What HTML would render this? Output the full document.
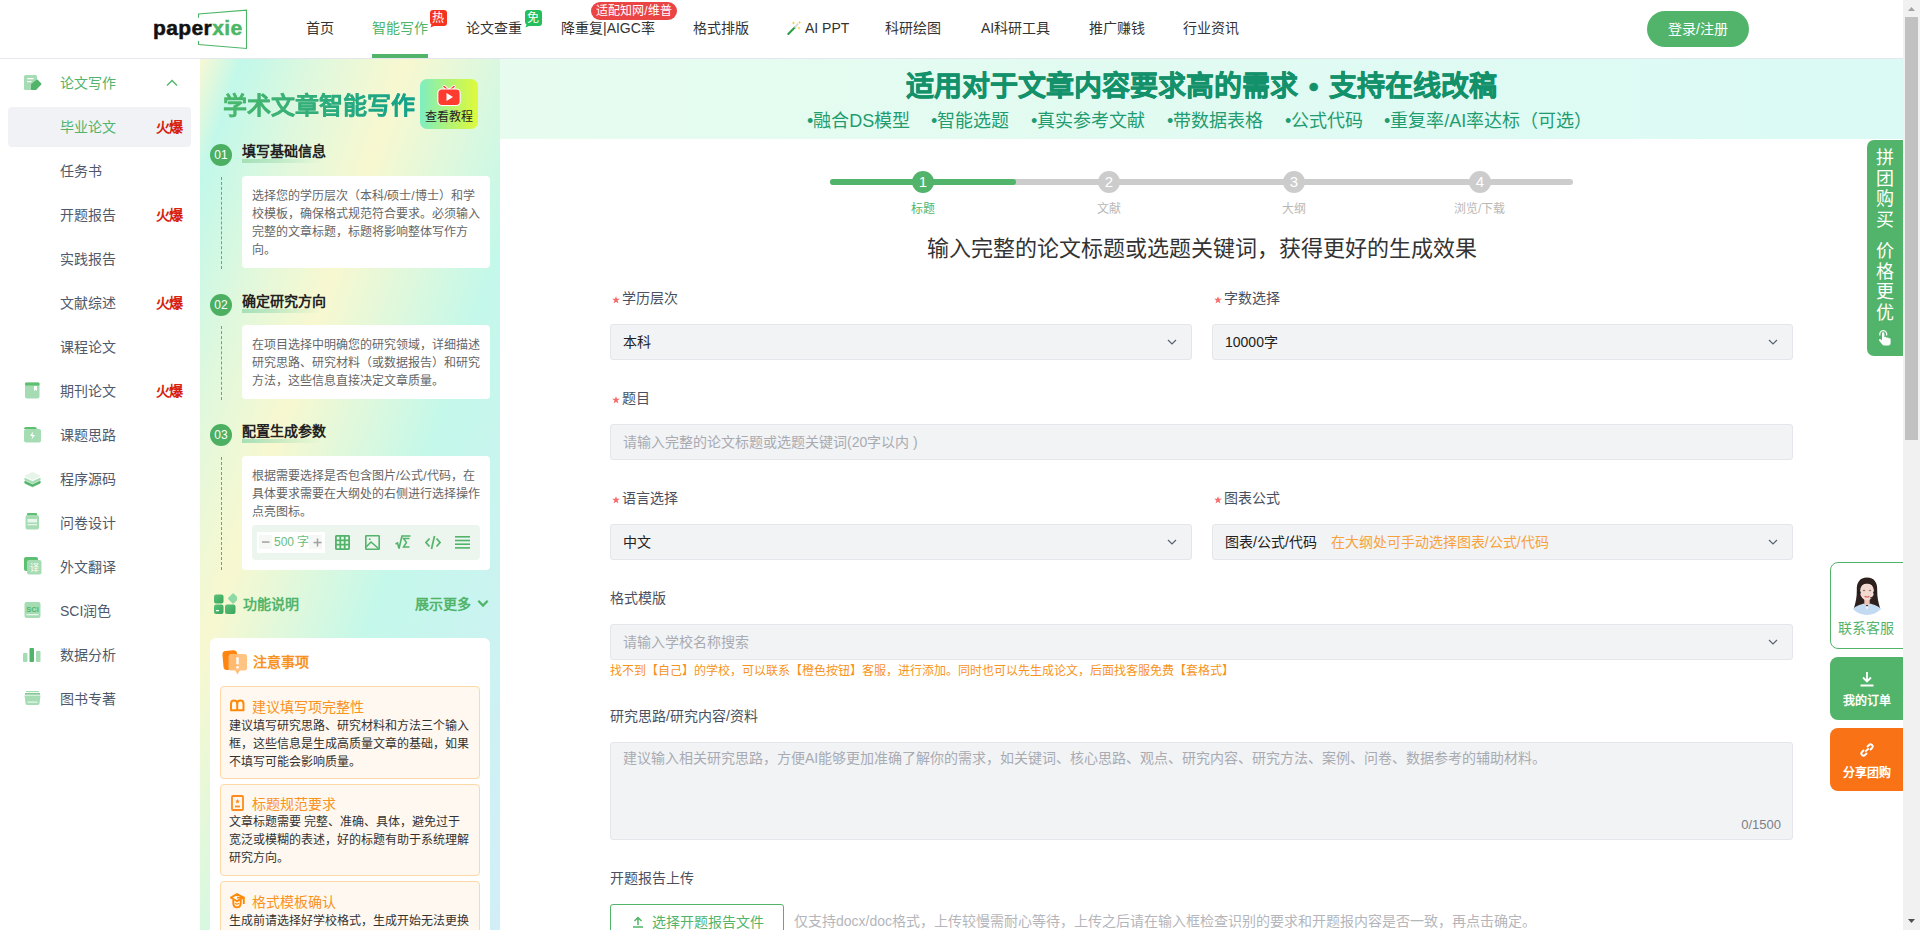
<!DOCTYPE html>
<html lang="zh-CN"><head><meta charset="utf-8">
<style>
*{box-sizing:border-box;margin:0;padding:0}
html,body{width:1920px;height:930px;overflow:hidden;background:#fff}
body{font-family:"Liberation Sans",sans-serif;color:#333;position:relative}
.a{position:absolute;white-space:nowrap}
/* header */
#hdr{position:absolute;left:0;top:0;width:1903px;height:59px;background:#fff;border-bottom:1px solid #e4e7ed}
.nav{position:absolute;top:18px;font-size:14px;line-height:20px;color:#333}
.badge{position:absolute;color:#fff;font-size:12px;line-height:16px;text-align:center}
/* sidebar */
#side{position:absolute;left:0;top:59px;width:200px;height:871px;background:#fff}
.si{position:absolute;left:60px;font-size:14px;line-height:20px;color:#4f596b}
.hot{position:absolute;left:156px;font-size:14px;line-height:20px;color:#d81e0c;font-weight:bold;letter-spacing:-1px}
.sic{position:absolute;left:24px}
/* panel */
#panel{position:absolute;left:200px;top:59px;width:300px;height:871px;
background:linear-gradient(109deg,#f8f8d4 0px,#c2f8ea 40px,#e2f8dc 120px,#f8f8d0 195px,#c4f8ea 345px,#d2eef8 570px)}
.stepno{position:absolute;left:10px;width:22px;height:22px;border-radius:50%;background:#4caf62;color:#fff;font-size:12px;line-height:22px;text-align:center}
.steptt{position:absolute;left:42px;font-size:14px;line-height:20px;font-weight:bold;color:#222}
.stepul{position:absolute;left:42px;width:80px;height:4px;background:linear-gradient(90deg,#a6dfb6,rgba(200,240,210,0))}
.dash{position:absolute;left:21px;width:0;border-left:1px dashed #52b46a}
.card{position:absolute;left:42px;width:248px;background:#fff;border-radius:4px}
.ctext{position:absolute;left:10px;top:11px;width:232px;font-size:12px;line-height:18px;color:#666;white-space:normal}
/* main */
#banner{position:absolute;left:500px;top:59px;width:1403px;height:80px;background:linear-gradient(90deg,#e7fcef,#dbfaf5)}
.lbl{position:absolute;font-size:14px;line-height:20px;color:#4a5060}
.lbs{padding-left:10px}
.star{position:absolute;left:0px;top:7.5px}
.inp{position:absolute;height:36px;background:#f2f3f5;border:1px solid #e4e6eb;border-radius:3px}
.itxt{position:absolute;left:12px;top:7px;font-size:14px;line-height:20px;color:#222;white-space:nowrap}
.ph{color:#a8abb2}
.chev{position:absolute;right:14px;top:14px}
.bul{top:50px;font-size:18px;line-height:24px;color:#1f9c70}
.sc{top:171px;width:22px;height:22px;border-radius:50%;background:#cccccc;color:#fff;font-size:15px;line-height:22px;text-align:center}
.sl{top:201px;font-size:12px;line-height:17px;color:#b8b8b8}
</style></head>
<body>
<!-- HEADER -->
<div id="hdr">
  <!-- logo -->
  <svg class="a" style="left:150px;top:8px" width="100" height="44" viewBox="0 0 100 44">
    <path d="M48.5 9.7 V6 L96.5 2.2 V40.5 L48.5 36.6 V33" fill="none" stroke="#4cb666" stroke-width="1.1"/>
  </svg>
  <div class="a" style="left:153px;top:15px;font-size:21px;line-height:25px;font-weight:bold;color:#111;letter-spacing:0.4px;-webkit-text-stroke:0.5px #111">paper<span style="color:#4cb666;-webkit-text-stroke:0.5px #4cb666">xie</span></div>

  <div class="nav" style="left:306px">首页</div>
  <div class="nav" style="left:372px;color:#4fb468">智能写作</div>
  <div class="a" style="left:372px;top:54px;width:56px;height:4px;background:#52b46a"></div>
  <svg class="a" style="left:426px;top:10px" width="21" height="18" viewBox="0 0 21 18"><path d="M7 0 H18 Q21 0 21 3 V13 Q21 16 18 16 H8 L4.5 17.5 L5.5 14.5 Q4 13.5 4 12 V3 Q4 0 7 0Z" fill="#f5341f"/></svg><div class="badge" style="left:430px;top:10px;width:16px;height:16px">热</div>
  <div class="nav" style="left:466px">论文查重</div>
  <svg class="a" style="left:521px;top:10px" width="21" height="18" viewBox="0 0 21 18"><path d="M7 0 H18 Q21 0 21 3 V13 Q21 16 18 16 H8 L4.5 17.5 L5.5 14.5 Q4 13.5 4 12 V3 Q4 0 7 0Z" fill="#22bf5c"/></svg><div class="badge" style="left:525px;top:10px;width:16px;height:16px">免</div>
  <div class="nav" style="left:561px">降重复|AIGC率</div>
  <div class="badge" style="left:591px;top:2px;width:86px;height:18px;line-height:18px;background:#ea4444;border-radius:9px">适配知网/维普</div>
  <div class="nav" style="left:693px">格式排版</div>
  <svg class="a" style="left:786px;top:20px" width="16" height="16" viewBox="0 0 16 16">
    <path d="M2.3 14 L9.2 7" stroke="#2e9e4a" stroke-width="2.1" stroke-linecap="round"/>
    <path d="M9.2 7 L11.7 4.3" stroke="#dcdcdc" stroke-width="2" stroke-linecap="round"/>
    <path d="M7.4 1.2 l0.55 1.25 1.25 0.55 -1.25 0.55 -0.55 1.25 -0.55 -1.25 -1.25 -0.55 1.25 -0.55z M13.6 0.7 l0.5 1.2 1.2 0.5 -1.2 0.5 -0.5 1.2 -0.5 -1.2 -1.2 -0.5 1.2 -0.5z M13 6.5 l0.5 1.1 1.1 0.5 -1.1 0.5 -0.5 1.1 -0.5 -1.1 -1.1 -0.5 1.1 -0.5z" fill="#f9c930"/>
  </svg>
  <div class="nav" style="left:805px">AI PPT</div>
  <div class="nav" style="left:885px">科研绘图</div>
  <div class="nav" style="left:981px">AI科研工具</div>
  <div class="nav" style="left:1089px">推广赚钱</div>
  <div class="nav" style="left:1183px">行业资讯</div>

  <div class="a" style="left:1647px;top:11px;width:102px;height:36px;border-radius:18px;background:#52b46a;color:#fff;font-size:14px;line-height:36px;text-align:center">登录/注册</div>
</div>

<!-- SIDEBAR -->
<div id="side">
  <svg class="sic" style="top:16px" width="18" height="16" viewBox="0 0 18 16">
    <rect x="0" y="0" width="13" height="15" rx="1.5" fill="#a6dcb3"/>
    <rect x="3" y="2.9" width="6.8" height="1.3" rx="0.6" fill="#fff"/><rect x="3" y="5.9" width="4.7" height="1.3" rx="0.6" fill="#fff"/>
    <path d="M7 9.8 Q7 9.2 7.5 8.8 L12.5 4.8 Q13.3 4.2 14 4.9 L17.3 8.4 Q17.9 9 17.3 9.6 L12.5 14.4 Q12.1 14.9 11.4 14.9 L7.6 14.9 Q7 14.9 7 14.3Z" fill="#52b46a"/>
  </svg>
  <div class="si" style="top:14px;color:#52b46a">论文写作</div>
  <svg class="a" style="left:166px;top:20px" width="12" height="8" viewBox="0 0 12 8"><path d="M1 6.5 L6 1.5 L11 6.5" fill="none" stroke="#52b46a" stroke-width="1.4"/></svg>
  <div class="a" style="left:8px;top:48px;width:183px;height:40px;background:#f0f2f5;border-radius:4px"></div>
  <div class="si" style="top:58px;color:#52b46a">毕业论文</div><div class="hot" style="top:58px">火爆</div>
  <div class="si" style="top:102px">任务书</div>
  <div class="si" style="top:146px">开题报告</div><div class="hot" style="top:146px">火爆</div>
  <div class="si" style="top:190px">实践报告</div>
  <div class="si" style="top:234px">文献综述</div><div class="hot" style="top:234px">火爆</div>
  <div class="si" style="top:278px">课程论文</div>
  <svg class="sic" style="top:323px" width="16" height="17" viewBox="0 0 16 17">
    <rect x="1" y="0.5" width="14.5" height="16" rx="2" fill="#a6dcb3"/><rect x="1" y="0.5" width="14.5" height="3" rx="1" fill="#5cbf72"/>
    <path d="M10 4 h3 v5 l-1.5 -1.2 l-1.5 1.2z" fill="#fff"/>
  </svg>
  <div class="si" style="top:322px">期刊论文</div><div class="hot" style="top:322px">火爆</div>
  <svg class="sic" style="top:368px" width="17" height="16" viewBox="0 0 17 16">
    <path d="M0 2 q0 -2 2 -2 h9 q1.5 0 2 2 h-13z" fill="#5cbf72"/>
    <rect x="0" y="2" width="17" height="13.5" rx="2" fill="#a6dcb3"/>
    <path d="M9 4.5 L6 9 h2.5 L7.5 12.5 L11 8 h-2.5z" fill="#fff"/>
  </svg>
  <div class="si" style="top:366px">课题思路</div>
  <svg class="sic" style="top:412px" width="17" height="17" viewBox="0 0 17 17" stroke-linejoin="round">
    <path d="M8.5 1.3 L15.8 5 L8.5 8.7 L1.2 5Z" fill="#e6f5ea" stroke="#e6f5ea" stroke-width="1"/>
    <path d="M0.8 7 L8.5 10.6 L16.2 7 L16.2 8.9 L8.5 12.5 L0.8 8.9Z" fill="#a6dcb3" stroke="#a6dcb3" stroke-width="0.6"/>
    <path d="M0.8 10 L8.5 13.6 L16.2 10 L16.2 12.2 L8.5 15.8 L0.8 12.2Z" fill="#52b46a" stroke="#52b46a" stroke-width="0.6"/>
  </svg>
  <div class="si" style="top:410px">程序源码</div>
  <svg class="sic" style="top:454px" width="16" height="17" viewBox="0 0 16 17">
    <rect x="3" y="0" width="10" height="3" rx="1" fill="#5cbf72"/>
    <rect x="1.5" y="2" width="13.5" height="14.5" rx="2" fill="#a6dcb3"/>
    <rect x="3.5" y="6" width="9.5" height="3.5" fill="#e8f6ec"/><rect x="3.5" y="11" width="9.5" height="1.3" fill="#e8f6ec"/>
  </svg>
  <div class="si" style="top:454px">问卷设计</div>
  <svg class="sic" style="top:498px" width="18" height="18" viewBox="0 0 18 18">
    <rect x="0" y="0" width="14" height="14" rx="2" fill="#5cbf72"/>
    <rect x="3" y="3" width="14.5" height="14.5" rx="2" fill="#a6dcb3"/>
    <text x="10.2" y="14" font-size="9" fill="#fff" text-anchor="middle" font-family="Liberation Sans,sans-serif">译</text>
  </svg>
  <div class="si" style="top:498px">外文翻译</div>
  <svg class="sic" style="top:543px" width="17" height="16" viewBox="0 0 17 16">
    <rect x="0.5" y="0" width="16" height="16" rx="2" fill="#a6dcb3"/>
    <text x="8.5" y="9.5" font-size="7.5" font-weight="bold" fill="#52b46a" text-anchor="middle" font-family="Liberation Sans,sans-serif">SCI</text>
    <rect x="2.5" y="12" width="12" height="1.3" fill="#e8f6ec"/>
  </svg>
  <div class="si" style="top:542px">SCI润色</div>
  <svg class="sic" style="top:589px;left:23px" width="18" height="14" viewBox="0 0 18 14">
    <rect x="0" y="5" width="4.5" height="9" rx="0.8" fill="#a6dcb3"/>
    <rect x="6.5" y="0" width="4.5" height="14" rx="0.8" fill="#52b46a"/>
    <rect x="13" y="3" width="4.5" height="11" rx="0.8" fill="#a6dcb3"/>
  </svg>
  <div class="si" style="top:586px">数据分析</div>
  <svg class="sic" style="top:632px" width="17" height="14" viewBox="0 0 17 14">
    <rect x="2" y="0" width="13" height="1.2" fill="#a6dcb3"/>
    <rect x="1" y="2.3" width="15" height="1.2" fill="#52b46a"/>
    <path d="M0.5 4.5 h16 l-1 8 q-0.3 1.5 -1.8 1.5 h-10.4 q-1.5 0 -1.8 -1.5z" fill="#a6dcb3"/>
    <rect x="3.5" y="10.5" width="10" height="1.2" fill="#e8f6ec"/>
  </svg>
  <div class="si" style="top:630px">图书专著</div>
</div>

<!-- PANEL -->
<div id="panel">
  <div class="a" style="left:23px;top:32px;font-size:24px;line-height:30px;font-weight:bold;background:linear-gradient(90deg,#4db86b,#12a28c);-webkit-background-clip:text;background-clip:text;color:transparent;-webkit-text-stroke:0.3px transparent">学术文章智能写作</div>
  <div class="a" style="left:220px;top:20px;width:58px;height:50px;border-radius:7px;background:linear-gradient(90deg,#7eeec2,#b6f46e 55%,#dffa3c)">
    <svg class="a" style="left:17px;top:6px" width="24" height="22" viewBox="0 0 24 22">
      <path d="M7 1.5 L11 5 M17 1.5 L13 5" stroke="#fff" stroke-width="3.2" stroke-linecap="round"/>
      <path d="M7 1.5 L11 5 M17 1.5 L13 5" stroke="#ff3b30" stroke-width="1.6" stroke-linecap="round"/>
      <rect x="0.8" y="4" width="22.4" height="16.5" rx="4" fill="#ff3b30" stroke="#fff" stroke-width="1.2"/>
      <path d="M9.5 8 L16 12 L9.5 16Z" fill="#fff"/>
    </svg>
    <div class="a" style="left:5px;top:30px;font-size:12px;line-height:16px;color:#222">查看教程</div>
  </div>

  <div class="stepno" style="top:85px">01</div>
  <div class="stepul" style="top:100px"></div>
  <div class="steptt" style="top:82px">填写基础信息</div>
  <div class="dash" style="top:118px;height:92px"></div>
  <div class="card" style="top:117px;height:92px"><div class="ctext">选择您的学历层次（本科/硕士/博士）和学校模板，确保格式规范符合要求。必须输入完整的文章标题，标题将影响整体写作方向。</div></div>

  <div class="stepno" style="top:235px">02</div>
  <div class="stepul" style="top:250px"></div>
  <div class="steptt" style="top:232px">确定研究方向</div>
  <div class="dash" style="top:267px;height:74px"></div>
  <div class="card" style="top:266px;height:74px"><div class="ctext">在项目选择中明确您的研究领域，详细描述研究思路、研究材料（或数据报告）和研究方法，这些信息直接决定文章质量。</div></div>

  <div class="stepno" style="top:365px">03</div>
  <div class="stepul" style="top:380px"></div>
  <div class="steptt" style="top:362px">配置生成参数</div>
  <div class="dash" style="top:398px;height:113px"></div>
  <div class="card" style="top:397px;height:114px"><div class="ctext">根据需要选择是否包含图片/公式/代码，在具体要求需要在大纲处的右侧进行选择操作点亮图标。</div>
    <div class="a" style="left:10px;top:69px;width:228px;height:35px;background:#edf6ee;border-radius:4px">
      <div class="a" style="left:5px;top:7px;width:68px;height:21px;background:#fff"></div>
      <div class="a" style="left:7px;top:10px;width:13px;height:14px;background:#f6f8f6"></div>
      <div class="a" style="left:57px;top:10px;width:13px;height:14px;background:#f6f8f6"></div>
      <svg class="a" style="left:10px;top:16px" width="8" height="3"><rect x="0" y="0.3" width="7.5" height="1.5" fill="#a0a0a0"/></svg>
      <div class="a" style="left:22px;top:9px;font-size:12px;line-height:17px;color:#66be7e">500 字</div>
      <svg class="a" style="left:61px;top:13px" width="9" height="9"><rect x="0.5" y="3.8" width="8" height="1.5" fill="#a0a0a0"/><rect x="3.75" y="0.5" width="1.5" height="8" fill="#a0a0a0"/></svg>
      <svg class="a" style="left:83px;top:10px" width="15" height="15" viewBox="0 0 15 15" fill="none" stroke="#52b46a" stroke-width="1.8">
        <rect x="0.9" y="0.9" width="13.2" height="13.2" rx="0.5"/><path d="M5.3 1 V14 M9.7 1 V14 M1 5.3 H14 M1 9.7 H14"/>
      </svg>
      <svg class="a" style="left:113px;top:10px" width="15" height="15" viewBox="0 0 15 15" fill="none" stroke="#52b46a" stroke-width="1.6">
        <rect x="0.8" y="0.8" width="13.4" height="13.4" rx="0.5"/><path d="M1 12 L6 7 L13.5 13.5"/><circle cx="4.8" cy="4.2" r="0.9" fill="#52b46a" stroke="none"/>
      </svg>
      <svg class="a" style="left:143px;top:10px" width="16" height="15" viewBox="0 0 16 15" fill="none" stroke="#52b46a" stroke-width="1.6">
        <path d="M0.5 9 L2.5 8 L4 13.5 L7 1 H15.5"/><path d="M14.5 3.5 H8.5 L11.5 7.5 L8.5 12 H14.5" stroke-width="1.5"/>
      </svg>
      <svg class="a" style="left:173px;top:10px" width="16" height="15" viewBox="0 0 16 15" fill="none" stroke="#52b46a" stroke-width="1.7">
        <path d="M4.5 3.5 L1 7.5 L4.5 11.5 M11.5 3.5 L15 7.5 L11.5 11.5 M9.5 1 L6.5 14"/>
      </svg>
      <svg class="a" style="left:203px;top:11px" width="15" height="13" viewBox="0 0 15 13" fill="#52b46a">
        <rect x="0" y="0" width="15" height="1.6"/><rect x="0" y="3.7" width="15" height="1.6"/><rect x="0" y="7.4" width="15" height="1.6"/><rect x="0" y="11.1" width="15" height="1.6"/>
      </svg>
    </div>
  </div>

  <svg class="a" style="left:14px;top:534px" width="23" height="22" viewBox="0 0 23 22">
    <defs><linearGradient id="gg" x1="0" y1="0" x2="1" y2="1"><stop offset="0" stop-color="#5cc27a"/><stop offset="1" stop-color="#3aa55a"/></linearGradient></defs>
    <rect x="0" y="1.5" width="9.5" height="9" rx="2" fill="url(#gg)"/>
    <rect x="14.5" y="0" width="8" height="8" rx="1.5" transform="rotate(45 17 5.5)" fill="#8fd9a6"/>
    <rect x="0" y="11.5" width="9.5" height="9.5" rx="2" fill="url(#gg)"/>
    <rect x="11" y="11.5" width="10.5" height="9.5" rx="2" fill="url(#gg)"/>
    <rect x="2" y="17" width="3" height="1.2" fill="#fff"/>
  </svg>
  <div class="a" style="left:43px;top:535px;font-size:14px;line-height:20px;font-weight:bold;color:#52b46a">功能说明</div>
  <div class="a" style="left:215px;top:535px;font-size:14px;line-height:20px;font-weight:bold;color:#52b46a">展示更多</div>
  <svg class="a" style="left:277px;top:540px" width="12" height="9" viewBox="0 0 12 9"><path d="M1.3 1.8 L6 6.5 L10.7 1.8" fill="none" stroke="#52b46a" stroke-width="2.3"/></svg>

  <div class="a" style="left:10px;top:579px;width:280px;height:300px;background:#fff;border-radius:6px">
    <svg class="a" style="left:12px;top:12px" width="26" height="26" viewBox="0 0 26 26">
      <path d="M0.5 5 Q0 1.5 3.5 1 L11 0.2 Q14.5 -0.2 15 3 L16.5 15 Q17 18.5 13.5 19 L5.5 20 Q2 20.5 1.5 17z" fill="#ff8410"/>
      <rect x="6.5" y="4" width="18.5" height="16.5" rx="2.5" fill="#ffbf78" opacity="0.92"/>
      <path d="M13 20 L15.5 24.5 L18 20z" fill="#ffbf78"/>
      <rect x="14.3" y="7" width="2.4" height="7.5" rx="1.2" fill="#fff"/><circle cx="15.5" cy="17.2" r="1.3" fill="#fff"/>
    </svg>
    <div class="a" style="left:43px;top:14px;font-size:14px;line-height:20px;font-weight:bold;color:#f7931e">注意事项</div>

    <div class="a" style="left:10px;top:48px;width:260px;height:93px;background:#fff8f0;border:1px solid #fcd9a6;border-radius:4px">
      <svg class="a" style="left:8px;top:12px" width="17" height="13" viewBox="0 0 17 13" fill="none" stroke="#ff8a0a" stroke-width="2">
        <path d="M2 11.5 V5 Q2 1.6 5 1.6 Q8.2 1.6 8.2 5 V11.5 M8.2 5 Q8.2 1.6 11.4 1.6 Q14.5 1.6 14.5 5 V11.5 M1.3 11.3 H15.2"/>
      </svg>
      <div class="a" style="left:31px;top:10px;font-size:14px;line-height:20px;color:#f7931e">建议填写项完整性</div>
      <div class="ctext" style="left:8px;top:30px;width:241px;color:#333">建议填写研究思路、研究材料和方法三个输入框，这些信息是生成高质量文章的基础，如果不填写可能会影响质量。</div>
    </div>
    <div class="a" style="left:10px;top:146px;width:260px;height:92px;background:#fff8f0;border:1px solid #fcd9a6;border-radius:4px">
      <svg class="a" style="left:10px;top:10px" width="13" height="16" viewBox="0 0 13 16" fill="none" stroke="#ff8a1c" stroke-width="1.8">
        <rect x="1" y="1" width="11" height="14" rx="1"/><path d="M4 11.5 H9"/><path d="M6.5 4 l0.7 1.5 1.6 0.2 -1.2 1.1 0.3 1.6 -1.4 -0.8 -1.4 0.8 0.3 -1.6 -1.2 -1.1 1.6 -0.2z" fill="#ff8a1c" stroke="none"/>
      </svg>
      <div class="a" style="left:31px;top:9px;font-size:14px;line-height:20px;color:#f7931e">标题规范要求</div>
      <div class="ctext" style="left:8px;top:28px;width:241px;color:#333">文章标题需要 完整、准确、具体，避免过于宽泛或模糊的表述，好的标题有助于系统理解研究方向。</div>
    </div>
    <div class="a" style="left:10px;top:243px;width:260px;height:80px;background:#fff8f0;border:1px solid #fcd9a6;border-radius:4px">
      <svg class="a" style="left:9px;top:11px" width="17" height="16" viewBox="0 0 17 16">
        <path d="M7 1 L13.6 4.6 L7 8.2 L0.9 4.6Z" fill="none" stroke="#ff8a0a" stroke-width="1.9" stroke-linejoin="round"/>
        <path d="M7 4.6 H13.8 V11" fill="none" stroke="#ff8a0a" stroke-width="1.9"/>
        <path d="M3.3 7 V10 Q3.3 14.3 7 14.3 Q10.7 14.3 10.7 10 V7" fill="none" stroke="#ff8a0a" stroke-width="1.9"/>
        <path d="M5 10.2 Q7 12 9 10.2" fill="none" stroke="#ff8a0a" stroke-width="1.2"/>
      </svg>
      <div class="a" style="left:31px;top:10px;font-size:14px;line-height:20px;color:#f7931e">格式模板确认</div>
      <div class="ctext" style="left:8px;top:30px;width:241px;color:#333">生成前请选择好学校格式，生成开始无法更换</div>
    </div>
  </div>
</div>

<!-- MAIN -->
<div id="banner">
  <div class="a" style="left:406px;top:11px;font-size:28px;line-height:34px;font-weight:bold;color:#13916a;word-spacing:3px;-webkit-text-stroke:0.6px #13916a">适用对于文章内容要求高的需求 • 支持在线改稿</div>
  <div class="a bul" style="left:307px">•融合DS模型</div>
  <div class="a bul" style="left:431px">•智能选题</div>
  <div class="a bul" style="left:531px">•真实参考文献</div>
  <div class="a bul" style="left:667px">•带数据表格</div>
  <div class="a bul" style="left:785px">•公式代码</div>
  <div class="a bul" style="left:884px">•重复率/AI率达标（可选）</div>
</div>

<div id="main">
  <!-- steps -->
  <div class="a" style="left:830px;top:179px;width:743px;height:6px;border-radius:3px;background:#cccccc"></div>
  <div class="a" style="left:830px;top:179px;width:186px;height:6px;border-radius:3px;background:#52b46a"></div>
  <div class="a sc" style="left:912px;background:#52b46a">1</div>
  <div class="a sc" style="left:1098px">2</div>
  <div class="a sc" style="left:1283px">3</div>
  <div class="a sc" style="left:1469px">4</div>
  <div class="a sl" style="left:911px;color:#52b46a">标题</div>
  <div class="a sl" style="left:1097px">文献</div>
  <div class="a sl" style="left:1282px">大纲</div>
  <div class="a sl" style="left:1454px">浏览/下载</div>

  <div class="a" style="left:927px;top:235px;font-size:22px;line-height:28px;color:#333">输入完整的论文标题或选题关键词，获得更好的生成效果</div>

  <div class="lbl lbs" style="left:612px;top:288px"><svg class="star" width="8" height="8" viewBox="0 0 7 7"><path d="M3.5 0.2 L4.35 2.45 L6.9 2.45 L4.85 3.95 L5.65 6.6 L3.5 5.05 L1.35 6.6 L2.15 3.95 L0.1 2.45 L2.65 2.45Z" fill="#f56c6c"/></svg>学历层次</div>
  <div class="inp" style="left:610px;top:324px;width:582px"><div class="itxt">本科</div><svg class="chev" width="10" height="7" viewBox="0 0 10 7"><path d="M1 1 L5 5 L9 1" fill="none" stroke="#5a6270" stroke-width="1.2"/></svg></div>
  <div class="lbl lbs" style="left:1214px;top:288px"><svg class="star" width="8" height="8" viewBox="0 0 7 7"><path d="M3.5 0.2 L4.35 2.45 L6.9 2.45 L4.85 3.95 L5.65 6.6 L3.5 5.05 L1.35 6.6 L2.15 3.95 L0.1 2.45 L2.65 2.45Z" fill="#f56c6c"/></svg>字数选择</div>
  <div class="inp" style="left:1212px;top:324px;width:581px"><div class="itxt">10000字</div><svg class="chev" width="10" height="7" viewBox="0 0 10 7"><path d="M1 1 L5 5 L9 1" fill="none" stroke="#5a6270" stroke-width="1.2"/></svg></div>

  <div class="lbl lbs" style="left:612px;top:388px"><svg class="star" width="8" height="8" viewBox="0 0 7 7"><path d="M3.5 0.2 L4.35 2.45 L6.9 2.45 L4.85 3.95 L5.65 6.6 L3.5 5.05 L1.35 6.6 L2.15 3.95 L0.1 2.45 L2.65 2.45Z" fill="#f56c6c"/></svg>题目</div>
  <div class="inp" style="left:610px;top:424px;width:1183px"><div class="itxt ph">请输入完整的论文标题或选题关键词(20字以内 )</div></div>

  <div class="lbl lbs" style="left:612px;top:488px"><svg class="star" width="8" height="8" viewBox="0 0 7 7"><path d="M3.5 0.2 L4.35 2.45 L6.9 2.45 L4.85 3.95 L5.65 6.6 L3.5 5.05 L1.35 6.6 L2.15 3.95 L0.1 2.45 L2.65 2.45Z" fill="#f56c6c"/></svg>语言选择</div>
  <div class="inp" style="left:610px;top:524px;width:582px"><div class="itxt">中文</div><svg class="chev" width="10" height="7" viewBox="0 0 10 7"><path d="M1 1 L5 5 L9 1" fill="none" stroke="#5a6270" stroke-width="1.2"/></svg></div>
  <div class="lbl lbs" style="left:1214px;top:488px"><svg class="star" width="8" height="8" viewBox="0 0 7 7"><path d="M3.5 0.2 L4.35 2.45 L6.9 2.45 L4.85 3.95 L5.65 6.6 L3.5 5.05 L1.35 6.6 L2.15 3.95 L0.1 2.45 L2.65 2.45Z" fill="#f56c6c"/></svg>图表公式</div>
  <div class="inp" style="left:1212px;top:524px;width:581px"><div class="itxt">图表/公式/代码<span style="color:#f7a23b;margin-left:14px">在大纲处可手动选择图表/公式/代码</span></div><svg class="chev" width="10" height="7" viewBox="0 0 10 7"><path d="M1 1 L5 5 L9 1" fill="none" stroke="#5a6270" stroke-width="1.2"/></svg></div>

  <div class="lbl" style="left:610px;top:588px">格式模版</div>
  <div class="inp" style="left:610px;top:624px;width:1183px"><div class="itxt ph">请输入学校名称搜索</div><svg class="chev" width="10" height="7" viewBox="0 0 10 7"><path d="M1 1 L5 5 L9 1" fill="none" stroke="#5a6270" stroke-width="1.2"/></svg></div>
  <div class="a" style="left:610px;top:663px;font-size:12px;line-height:17px;color:#f7941d">找不到【自己】的学校，可以联系【橙色按钮】客服，进行添加。同时也可以先生成论文，后面找客服免费【套格式】</div>

  <div class="lbl" style="left:610px;top:706px">研究思路/研究内容/资料</div>
  <div class="inp" style="left:610px;top:742px;width:1183px;height:98px"><div class="itxt ph" style="top:5px">建议输入相关研究思路，方便AI能够更加准确了解你的需求，如关键词、核心思路、观点、研究内容、研究方法、案例、问卷、数据参考的辅助材料。</div>
    <div class="a" style="right:11px;top:73px;font-size:13px;line-height:18px;color:#7a7f88">0/1500</div></div>

  <div class="lbl" style="left:610px;top:868px">开题报告上传</div>
  <div class="a" style="left:610px;top:904px;width:174px;height:40px;border:1px solid #52b46a;border-radius:3px;background:#fff">
    <svg class="a" style="left:21px;top:11px" width="12" height="12" viewBox="0 0 12 12" fill="none" stroke="#52b46a" stroke-width="1.5"><path d="M6 9 V1.5 M2.5 5 L6 1.5 L9.5 5 M1 11 H11"/></svg>
    <div class="a" style="left:41px;top:7px;font-size:14px;line-height:20px;color:#52b46a">选择开题报告文件</div>
  </div>
  <div class="a" style="left:794px;top:911px;font-size:14px;line-height:20px;color:#b4b6bb">仅支持docx/doc格式，上传较慢需耐心等待，上传之后请在输入框检查识别的要求和开题报内容是否一致，再点击确定。</div>
</div>

<!-- floating right -->
<div class="a" style="left:1867px;top:140px;width:36px;height:216px;background:#52b46a;border-radius:7px 0 0 7px">
  <div class="a" style="left:9px;top:8px;width:18px;font-size:18px;line-height:20.5px;color:#fff;white-space:normal;text-align:center">拼团购买</div>
  <div class="a" style="left:9px;top:101px;width:18px;font-size:18px;line-height:20.5px;color:#fff;white-space:normal;text-align:center">价格更优</div>
  <svg class="a" style="left:10px;top:189px" width="16" height="17" viewBox="0 0 16 17" fill="#fff">
    <path d="M3 6.5 A3.5 3.5 0 1 1 9.5 6.5" fill="none" stroke="#fff" stroke-width="1.2"/>
    <path d="M5 4.5 q0 -1.3 1.2 -1.3 q1.2 0 1.2 1.3 v4 q0.3 -0.8 1.3 -0.6 q0.9 0.2 1 1 q0.4 -0.6 1.2 -0.4 q0.8 0.2 0.9 1 q0.4 -0.4 1 -0.2 q0.8 0.2 0.8 1 v4 q0 2 -2 2.2 h-4.5 q-1 0 -1.6 -0.8 l-3.3 -4 q-0.6 -0.9 0.2 -1.4 q0.8 -0.5 1.6 0.3 l1 1z"/>
  </svg>
</div>

<div class="a" style="left:1830px;top:562px;width:80px;height:87px;background:#fff;border:1.5px solid #52b46a;border-radius:8px 0 0 8px">
  <svg class="a" style="left:20.5px;top:13.5px" width="30" height="38" viewBox="0 0 30 38">
    <defs><clipPath id="avc"><circle cx="15" cy="18.5" r="19.5"/></clipPath></defs>
    <g clip-path="url(#avc)">
    <path d="M15 0.5 C7.5 0.5 4.5 6 4.8 13 C5 20 3.5 26 2 31 L28 31 C26.5 26 25 20 25.2 13 C25.5 6 22.5 0.5 15 0.5Z" fill="#2e211d"/>
    <rect x="12.3" y="21" width="5.4" height="7" fill="#ebc6b8"/>
    <ellipse cx="15" cy="14.5" rx="7" ry="9" fill="#f2dad0"/>
    <path d="M7.8 11 C8.5 4.5 12.5 3.5 15 4.2 C17.5 3.5 21.5 4.5 22.2 11 C20.5 7.5 17.5 6.5 15 6.8 C12.5 6.5 9.5 7.5 7.8 11Z" fill="#2e211d"/>
    <path d="M0 38 L0 33 C3 29 8 27.5 12 26.5 L15 32 L18 26.5 C22 27.5 27 29 30 33 L30 38Z" fill="#c3daf3"/>
    <path d="M12 26.5 L15 33 L18 26.5 L15 29.5Z" fill="#eef5fc"/>
    <ellipse cx="12" cy="13.5" rx="1.3" ry="0.7" fill="#9a7a70"/><ellipse cx="18" cy="13.5" rx="1.3" ry="0.7" fill="#9a7a70"/>
    <path d="M12.6 19.2 Q15 20.8 17.4 19.2" stroke="#e05a5a" stroke-width="1.1" fill="none"/>
    <circle cx="7" cy="15.5" r="1.8" fill="#1f1f1f"/><circle cx="23" cy="15.5" r="1.8" fill="#1f1f1f"/>
    <path d="M23 17 Q22.5 20.5 18 21" stroke="#2a2a2a" stroke-width="0.9" fill="none"/>
    </g>
  </svg>
  <div class="a" style="left:7px;top:55px;font-size:14px;line-height:20px;color:#52b46a">联系客服</div>
</div>
<div class="a" style="left:1830px;top:657px;width:80px;height:63px;background:#52b46a;border-radius:8px 0 0 8px">
  <svg class="a" style="left:29px;top:14px" width="16" height="16" viewBox="0 0 16 16" fill="none" stroke="#fff" stroke-width="1.8"><path d="M8 1 V10 M4 6.5 L8 10.5 L12 6.5 M1.5 14.5 H14.5"/></svg>
  <div class="a" style="left:13px;top:36px;font-size:12px;line-height:17px;color:#fff;font-weight:bold">我的订单</div>
</div>
<div class="a" style="left:1830px;top:728px;width:80px;height:63px;background:#f97316;border-radius:8px 0 0 8px">
  <svg class="a" style="left:29px;top:14px" width="16" height="16" viewBox="0 0 16 16" fill="none" stroke="#fff" stroke-width="1.9" stroke-linecap="round">
    <path d="M6.8 9.2 L9.2 6.8"/><path d="M8.5 4.5 L10 3 Q11.5 1.5 13 3 Q14.5 4.5 13 6 L11.5 7.5"/><path d="M7.5 11.5 L6 13 Q4.5 14.5 3 13 Q1.5 11.5 3 10 L4.5 8.5"/>
  </svg>
  <div class="a" style="left:13px;top:37px;font-size:12px;line-height:17px;color:#fff;font-weight:bold">分享团购</div>
</div>

<!-- scrollbar -->
<div class="a" style="left:1903px;top:0;width:17px;height:930px;background:#f1f1f1"></div>
<div class="a" style="left:1905px;top:17px;width:13px;height:423px;background:#c1c1c1"></div>
<svg class="a" style="left:1903px;top:0" width="17" height="17"><path d="M5 11 L8.5 7 L12 11Z" fill="#a3a3a3"/></svg>
<svg class="a" style="left:1903px;top:913px" width="17" height="17"><path d="M5 6 L8.5 10 L12 6Z" fill="#505050"/></svg>
</body></html>
